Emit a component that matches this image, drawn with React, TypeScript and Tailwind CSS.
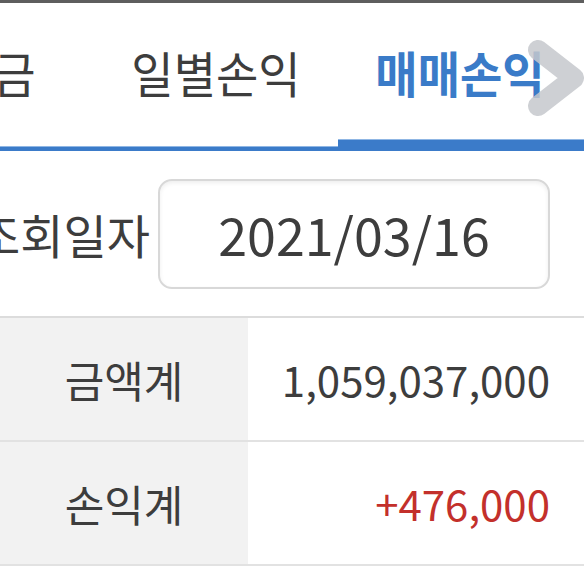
import React from 'react';

const font = { fontFamily: '"Noto Sans CJK KR", "Noto Sans", sans-serif' };

const tabs = [
  { label: '예수금', active: false },
  { label: '일별손익', active: false },
  { label: '매매손익', active: true },
];

const rows = [
  { label: '금액계', value: '1,059,037,000', red: false },
  { label: '손익계', value: '+476,000', red: true },
];

const App: React.FC = () => {
  return (
    <div className="w-[584px] h-[567px] overflow-hidden bg-white text-[#3d3d3d]" style={font}>
      {/* top edge */}
      <div className="h-[3px] bg-[#5e5e5e]" />

      {/* tabs */}
      <div className="relative h-[136px] overflow-hidden">
        <div className="flex h-full items-center pt-[2px] -ml-[150px]">
          {tabs.map((t) => (
            <div
              key={t.label}
              className={
                'w-[244px] shrink-0 text-center text-[46px] leading-none whitespace-nowrap scale-y-[1.06] ' +
                (t.active ? 'font-bold text-[#3a7bc8]' : 'text-[#3d3d3d]')
              }
            >
              {t.label}
            </div>
          ))}
        </div>
        <svg className="absolute right-0 top-0" width="60" height="136" viewBox="0 0 60 136">
          <polyline
            points="14,47 50,75 14,103"
            fill="none"
            stroke="#c6c8cc"
            strokeOpacity="0.85"
            strokeWidth="20"
            strokeLinecap="round"
            strokeLinejoin="round"
          />
        </svg>
      </div>

      {/* tab underline */}
      <div className="flex h-[12px] items-end">
        <div className="w-[338px] h-[5px] bg-[#3b7bc9] border-t border-[#8fb6e4]" />
        <div className="flex-1 h-[12px] bg-[#3b7bc9] border-t border-[#8fb6e4]" />
      </div>

      {/* date row */}
      <div className="flex h-[165px] items-center">
        <div className="w-[150px] flex justify-end">
          <span className="text-[47px] leading-none whitespace-nowrap text-[#3d3d3d]">조회일자</span>
        </div>
        <div className="ml-[8px] w-[392px] h-[110px] rounded-[14px] border-2 border-[#d8d8d8] bg-white shadow-[inset_0_2px_4px_rgba(0,0,0,0.07)] flex items-center justify-center">
          <span className="text-[52px] leading-none text-[#3d3d3d]">2021/03/16</span>
        </div>
      </div>

      {/* totals */}
      <div className="border-t-2 border-[#dcdcdc]">
        {rows.map((r) => (
          <div key={r.label} className="grid grid-cols-[248px_1fr] h-[124px] border-b-2 border-[#e2e2e2]">
            <div className="bg-[#f2f2f2] flex items-center justify-center text-[43px] leading-none text-[#3d3d3d]">
              {r.label}
            </div>
            <div
              className={
                'flex items-center justify-end pr-[34px] text-[42px] leading-none ' +
                (r.red ? 'text-[#c3302b]' : 'text-[#3d3d3d]')
              }
            >
              {r.value}
            </div>
          </div>
        ))}
      </div>
    </div>
  );
};

export default App;
